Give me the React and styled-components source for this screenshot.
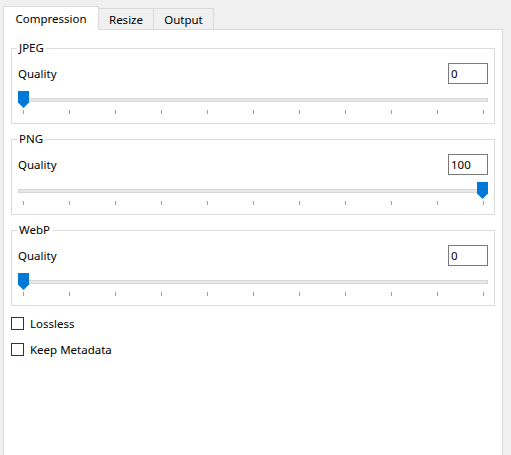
import React from "react";
import styled, { createGlobalStyle } from "styled-components";

const Global = createGlobalStyle`
  html, body { margin: 0; padding: 0; background: #f0f0f0; overflow: hidden; }
  body { font-family: "Noto Sans", "Segoe UI", sans-serif; font-size: 11.5px; color: #000; }
`;

const Page = styled.div`
  width: 511px;
  height: 458px;
  display: flex;
  flex-direction: column;
  padding-top: 6px;
  box-sizing: border-box;
`;

const TabStrip = styled.div`
  display: flex;
  align-items: flex-end;
  padding-left: 3px;
  height: 23px;
`;

const Tab = styled.div`
  box-sizing: border-box;
  width: ${(p) => p.$w}px;
  height: ${(p) => (p.$active ? 24 : 21)}px;
  margin-left: ${(p) => (p.$first ? 0 : -1)}px;
  margin-bottom: ${(p) => (p.$active ? -1 : 0)}px;
  border: 1px solid #d9d9d9;
  border-bottom: none;
  background: ${(p) => (p.$active ? "#ffffff" : "#f0f0f0")};
  position: relative;
  z-index: ${(p) => (p.$active ? 2 : 1)};
  display: flex;
  align-items: center;
  justify-content: center;
  padding-top: ${(p) => (p.$active ? 0 : 1)}px;
  line-height: 16px;
`;

const Panel = styled.div`
  flex: 1;
  width: 500px;
  margin-left: 3px;
  box-sizing: border-box;
  background: #fff;
  border: 1px solid #d9d9d9;
  padding: 11px 7px 0 7px;
  display: flex;
  flex-direction: column;
`;

const Groups = styled.div`
  display: flex;
  flex-direction: column;
  gap: 8px;
`;

const Group = styled.fieldset`
  margin: 0;
  padding: 0 6px 9px 6px;
  border: 1px solid #dcdcdc;
  min-width: 0;
`;

const Legend = styled.legend`
  margin-left: -1px;
  padding: 0 2px;
  line-height: 14px;
  font-size: 11.5px;
`;

const Row = styled.div`
  display: flex;
  align-items: center;
  justify-content: space-between;
  margin-top: 8px;
  height: 21px;
`;

const Label = styled.span`
  line-height: 16px;
`;

const TextBox = styled.div`
  box-sizing: border-box;
  width: 40px;
  height: 21px;
  border: 1px solid #7a7a7a;
  padding-left: 2px;
  display: flex;
  align-items: center;
  line-height: 16px;
`;

const Slider = styled.div`
  margin-top: 5px;
  display: flex;
  flex-direction: column;
`;

const TrackArea = styled.div`
  position: relative;
  height: 19px;
`;

const Track = styled.div`
  position: absolute;
  left: 0;
  right: 0;
  top: 9px;
  height: 4px;
  box-sizing: border-box;
  background: #e7eae8;
  border: 1px solid #d6d6d6;
`;

const Thumb = styled.svg`
  position: absolute;
  top: 2px;
  display: block;
`;

const Ticks = styled.div`
  margin-top: 2px;
  height: 4px;
  display: flex;
  justify-content: space-between;
  padding: 0 4px 0 5px;
`;

const Tick = styled.div`
  width: 1px;
  height: 4px;
  background: #a0a0a0;
`;

const CheckList = styled.div`
  display: flex;
  flex-direction: column;
  gap: 13px;
  margin-top: 11px;
  padding-left: 0;
`;

const CheckRow = styled.label`
  display: flex;
  align-items: center;
  gap: 6px;
  height: 13px;
  line-height: 16px;
`;

const Box = styled.span`
  box-sizing: border-box;
  width: 13px;
  height: 13px;
  border: 1px solid #333;
  background: #fff;
`;

const TRACK_W = 470;
const THUMB_W = 11;

function QualitySlider({ value }) {
  const left = (value / 100) * (TRACK_W - THUMB_W);
  return (
    <Slider>
      <TrackArea>
        <Track />
        <Thumb width="11" height="17" viewBox="0 0 11 17" style={{ left }}>
          <path d="M0 0 H11 V11.5 L5.5 17 L0 11.5 Z" fill="#0078d7" />
        </Thumb>
      </TrackArea>
      <Ticks>
        {Array.from({ length: 11 }).map((_, i) => (
          <Tick key={i} />
        ))}
      </Ticks>
    </Slider>
  );
}

function QualityGroup({ title, value }) {
  return (
    <Group>
      <Legend>{title}</Legend>
      <Row>
        <Label>Quality</Label>
        <TextBox>{value}</TextBox>
      </Row>
      <QualitySlider value={value} />
    </Group>
  );
}

export default function App() {
  return (
    <>
      <Global />
      <Page>
        <TabStrip>
          <Tab $active $first $w={96}>Compression</Tab>
          <Tab $w={56}>Resize</Tab>
          <Tab $w={61}>Output</Tab>
        </TabStrip>
        <Panel>
          <Groups>
            <QualityGroup title="JPEG" value={0} />
            <QualityGroup title="PNG" value={100} />
            <QualityGroup title="WebP" value={0} />
          </Groups>
          <CheckList>
            <CheckRow>
              <Box />
              Lossless
            </CheckRow>
            <CheckRow>
              <Box />
              Keep Metadata
            </CheckRow>
          </CheckList>
        </Panel>
      </Page>
    </>
  );
}
